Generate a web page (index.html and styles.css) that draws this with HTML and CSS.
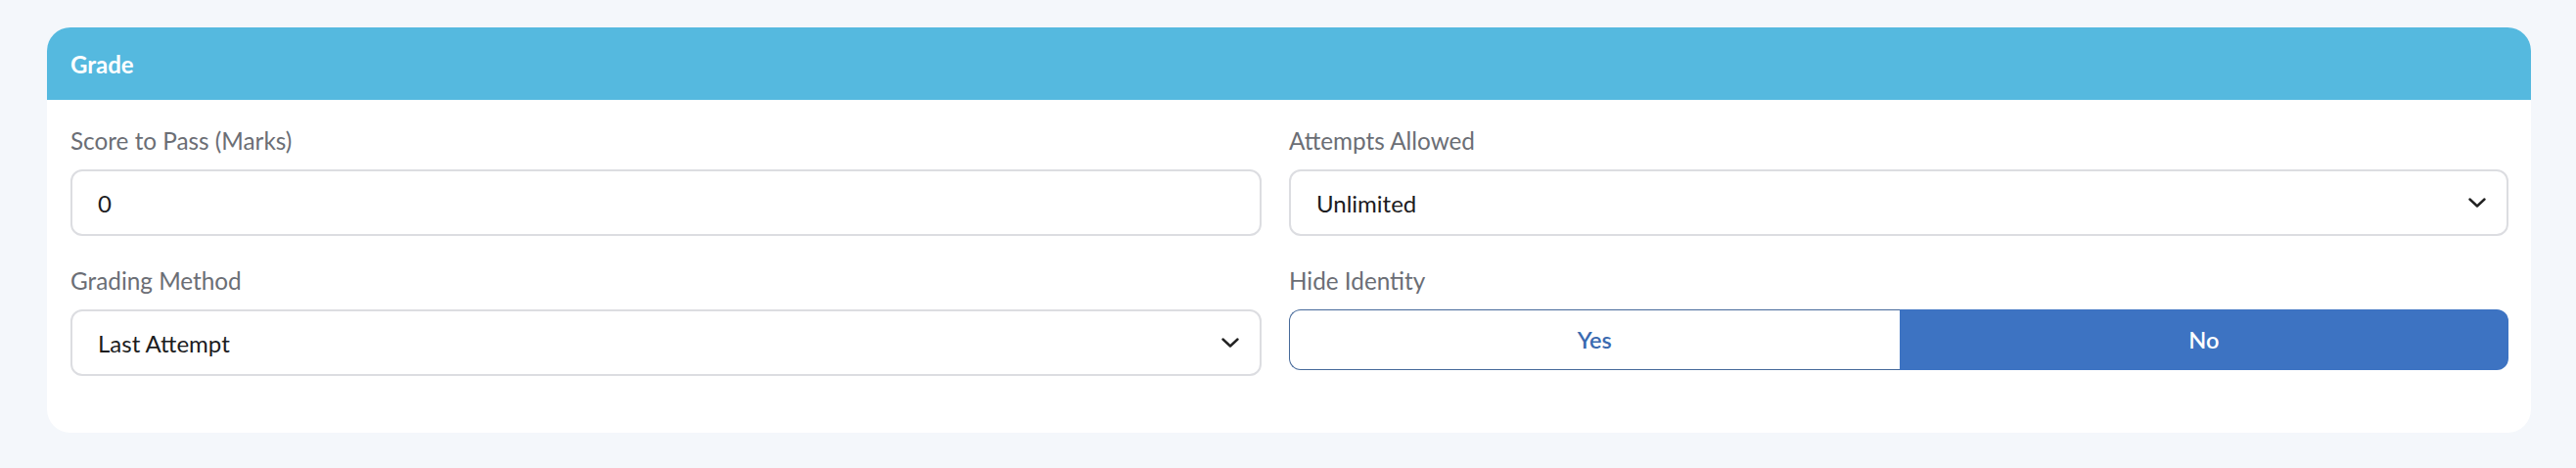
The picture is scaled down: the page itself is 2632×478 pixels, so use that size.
FILE: index.html
```html
<!DOCTYPE html>
<html lang="en">
<head>
<meta charset="utf-8">
<title>Grade</title>
<link rel="stylesheet" href="styles.css">
</head>
<body>
<section class="card">
  <header class="card-head">Grade</header>
  <div class="card-body">
    <div class="field">
      <label class="label">Score to Pass (Marks)</label>
      <div class="control">0</div>
    </div>
    <div class="field">
      <label class="label">Attempts Allowed</label>
      <div class="control select">
        <span>Unlimited</span>
        <svg class="chev" viewBox="0 0 18 10" width="18" height="10"><path d="M1.5 1.5 L9 8.5 L16.5 1.5" fill="none" stroke="#222" stroke-width="2.4" stroke-linecap="round" stroke-linejoin="round"/></svg>
      </div>
    </div>
    <div class="field">
      <label class="label">Grading Method</label>
      <div class="control select">
        <span>Last Attempt</span>
        <svg class="chev" viewBox="0 0 18 10" width="18" height="10"><path d="M1.5 1.5 L9 8.5 L16.5 1.5" fill="none" stroke="#222" stroke-width="2.4" stroke-linecap="round" stroke-linejoin="round"/></svg>
      </div>
    </div>
    <div class="field">
      <label class="label">Hide Identity</label>
      <div class="toggle">
        <button class="opt opt-off">Yes</button>
        <button class="opt opt-on">No</button>
      </div>
    </div>
  </div>
</section>
</body>
</html>
```
FILE: styles.css
```css
html, body {
  margin: 0;
  padding: 0;
}
body {
  background: #f4f7fb;
  font-family: "Lato", "Noto Sans", sans-serif;
  padding: 28px 46px 36px 48px;
  height: 478px;
  box-sizing: border-box;
}
.card {
  background: #ffffff;
  border-radius: 24px;
  overflow: hidden;
  height: 414px;
}
.card-head {
  background: #55b9df;
  color: #ffffff;
  font-weight: 700;
  font-size: 24px;
  height: 74px;
  display: flex;
  align-items: center;
  padding-left: 24px;
  box-sizing: border-box;
}
.card-body {
  display: grid;
  grid-template-columns: 1217fr 1246fr;
  column-gap: 28px;
  row-gap: 29px;
  padding: 25px 23px 24px 24px;
}
.field {
  display: flex;
  flex-direction: column;
}
.label {
  color: #6b6e75;
  font-size: 24.3px;
  line-height: 34px;
  margin-bottom: 12px;
}
.control {
  height: 68px;
  box-sizing: border-box;
  border: 2px solid #dcdde1;
  border-radius: 12px;
  padding: 0 26px;
  display: flex;
  align-items: center;
  font-size: 24px;
  color: #1c1c1e;
}
.select {
  justify-content: space-between;
  padding-right: 21px;
}
.chev {
  display: block;
}
.toggle {
  display: flex;
  height: 62px;
}
.opt {
  flex: 1 1 0;
  font-family: inherit;
  font-size: 23.5px;
  font-weight: 600;
  margin: 0;
  cursor: pointer;
}
.opt-off {
  background: #ffffff;
  color: #3a6ab0;
  border: 1px solid #46699a;
  border-right: none;
  border-radius: 12px 0 0 12px;
}
.opt-on {
  background: #3d73c2;
  color: #ffffff;
  border: none;
  border-radius: 0 12px 12px 0;
}
```
